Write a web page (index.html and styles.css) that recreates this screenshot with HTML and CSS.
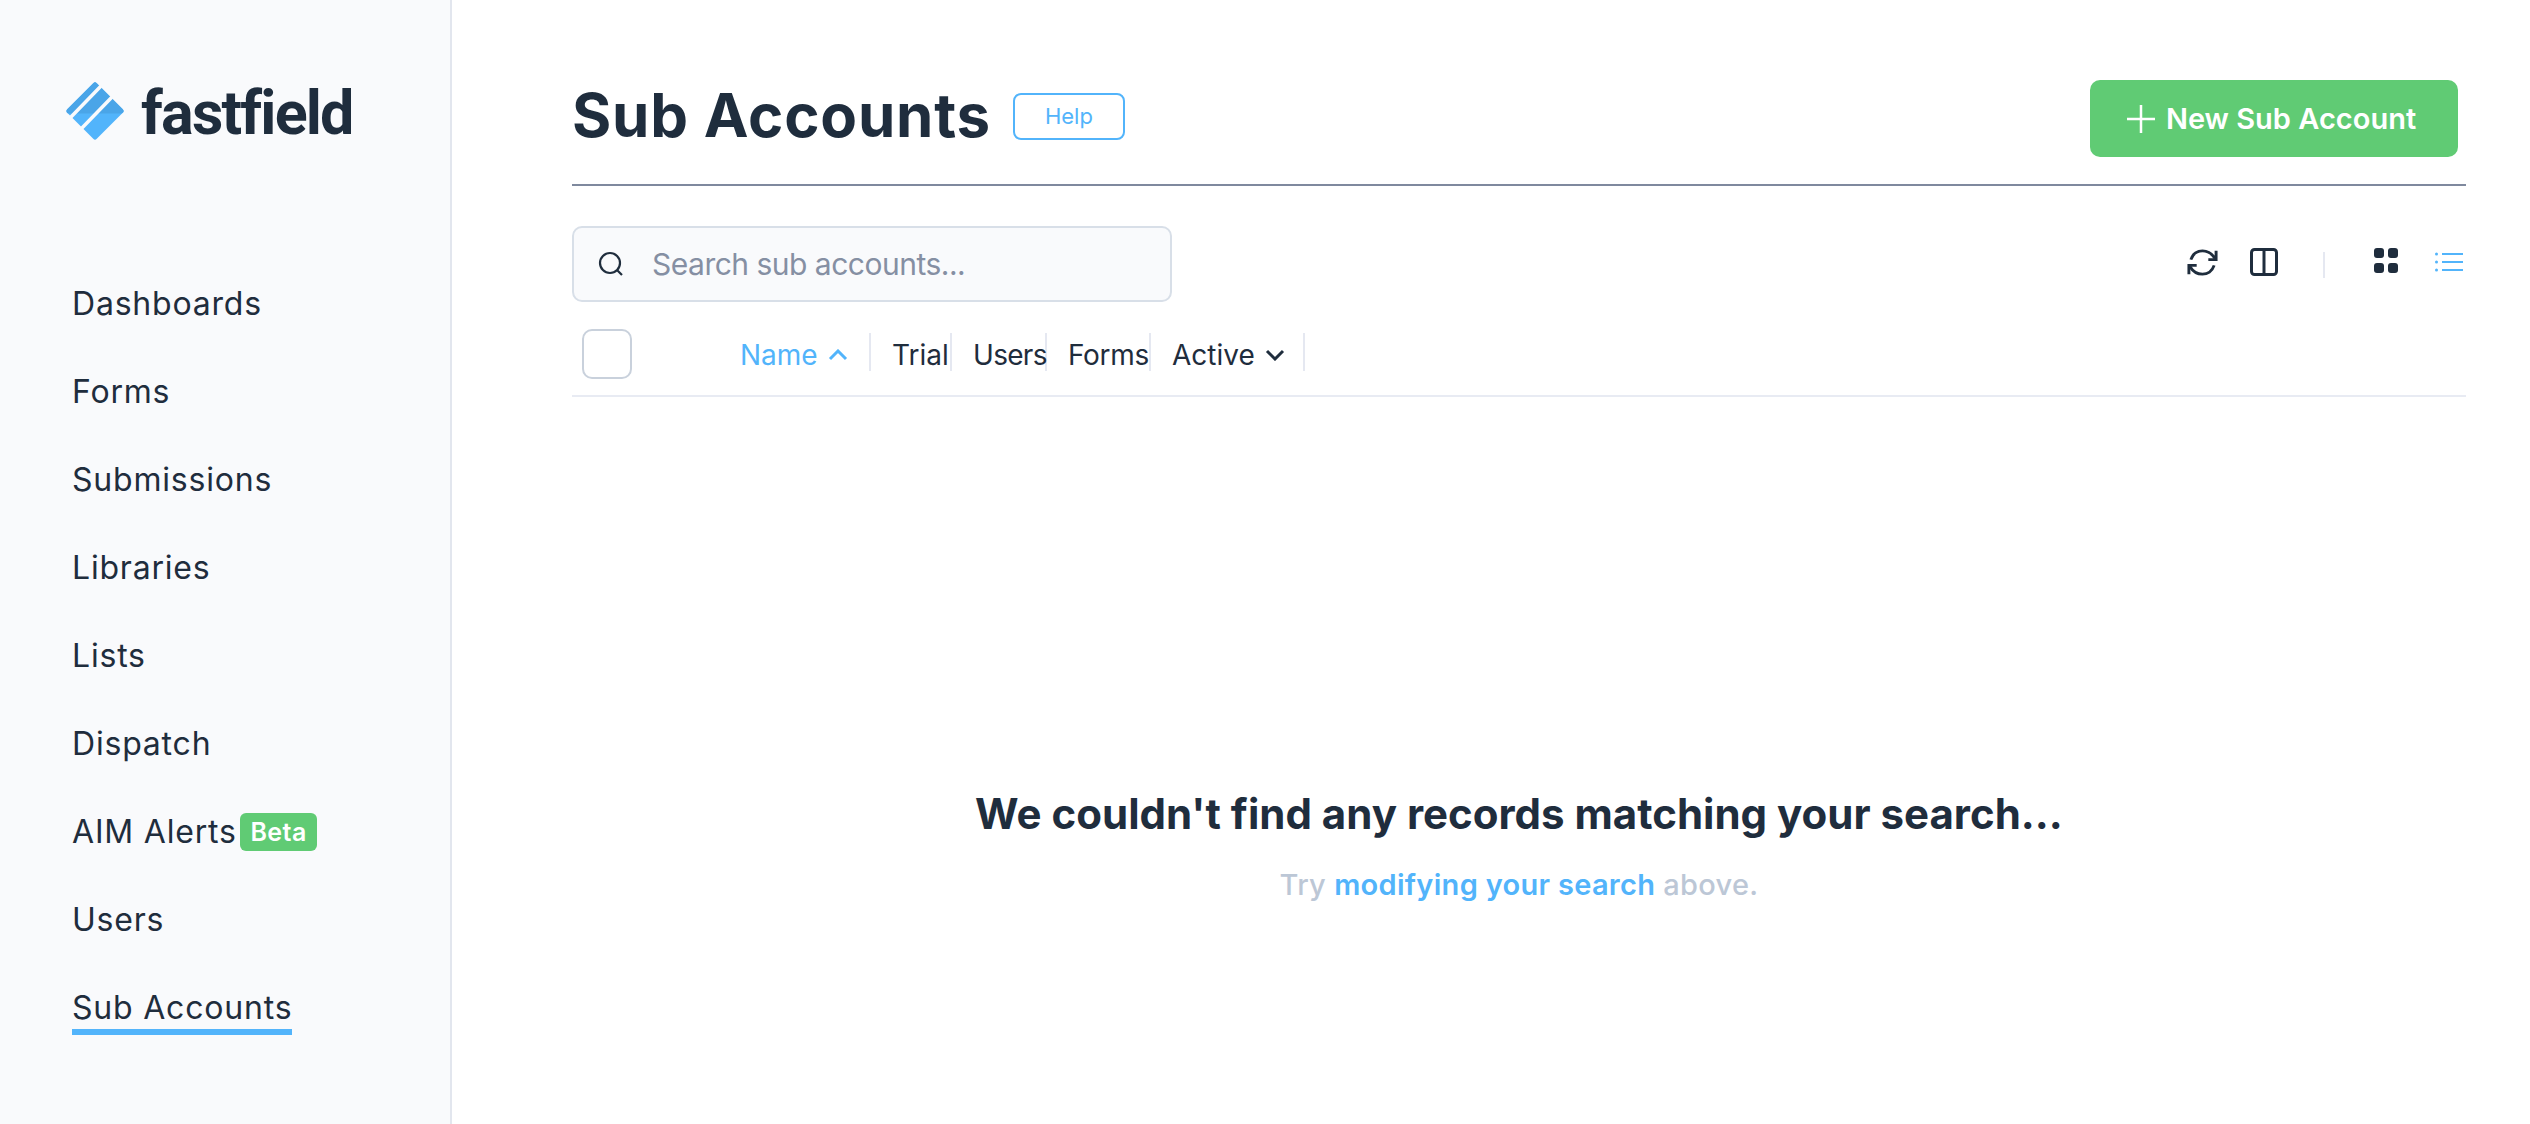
FILE: index.html
```html
<!DOCTYPE html>
<html lang="en">
<head>
  <meta charset="UTF-8">
  <title>Sub Accounts</title>
  <link rel="stylesheet" href="styles.css">
</head>
<body>

<div class="sidebar">
  <div class="logo">
    <svg class="logo-mark" width="58" height="58" viewBox="0 0 58 58">
      <path d="M29 3 L55 29 L29 55 L3 29 Z" fill="#52b4fb" stroke="#52b4fb" stroke-width="5" stroke-linejoin="round"/>
      <path d="M29 3 L55 29 H3 Z" fill="#4aa5e8" stroke="#4aa5e8" stroke-width="5" stroke-linejoin="round"/>
      <path d="M4 36 L36 3 M15 47 L47 14" stroke="#f9fafc" stroke-width="3.5"/>
    </svg>
    <span class="logo-text">fastfield</span>
  </div>
  <nav class="nav">
    <a href="#">Dashboards</a>
    <a href="#">Forms</a>
    <a href="#">Submissions</a>
    <a href="#">Libraries</a>
    <a href="#">Lists</a>
    <a href="#">Dispatch</a>
    <a href="#">AIM Alerts <span class="beta">Beta</span></a>
    <a href="#">Users</a>
    <a href="#" class="active">Sub Accounts</a>
  </nav>
</div>

<div class="main">
  <div class="page-header">
    <h1>Sub Accounts</h1>
    <button class="help-btn">Help</button>
    <button class="new-btn">
      <svg width="30" height="30" viewBox="0 0 30 30"><path d="M15 1 V29 M1 15 H29" stroke="#fff" stroke-width="2.5"/></svg>
      New Sub Account
    </button>
  </div>

  <div class="toolbar">
    <div class="search">
      <svg width="26" height="26" viewBox="0 0 26 26" fill="none" stroke="#1f2d3d" stroke-width="2.2"><circle cx="12" cy="12" r="10"/><path d="M19 19 L24 24"/></svg>
      <span>Search sub accounts...</span>
    </div>
    <div class="tools">
      <svg class="tool-refresh" width="33" height="29" viewBox="0 0 34 28" fill="none" stroke="#1f2d3d" stroke-width="3"><path d="M5 11 C7 5 12 2 17 2 C23 2 27 5 30 10"/><path d="M31 2 V11 H23"/><path d="M29 17 C27 23 22 26 17 26 C11 26 7 23 4 18"/><path d="M3 26 V17 H11"/></svg>
      <svg class="tool-cols" width="28" height="28" viewBox="0 0 28 28" fill="none" stroke="#1f2d3d" stroke-width="3"><rect x="1.5" y="1.5" width="25" height="25" rx="3"/><path d="M14 1.5 V26.5"/></svg>
      <span class="tool-sep"></span>
      <svg class="tool-grid" width="24" height="25" viewBox="0 0 24 25" fill="#1f2d3d"><rect width="10" height="10" rx="3"/><rect x="14" width="10" height="10" rx="3"/><rect y="15" width="10" height="10" rx="3"/><rect x="14" y="15" width="10" height="10" rx="3"/></svg>
      <svg class="tool-list" width="28" height="20" viewBox="0 0 28 20" fill="#52b4fb"><circle cx="1.5" cy="2" r="1.5"/><circle cx="1.5" cy="10" r="1.5"/><circle cx="1.5" cy="18" r="1.5"/><rect x="7" y="1" width="21" height="2"/><rect x="7" y="9" width="21" height="2"/><rect x="7" y="17" width="21" height="2"/></svg>
    </div>
  </div>

  <div class="table-head">
    <div class="check-cell"><span class="check"></span></div>
    <div class="col col-name">Name <svg width="20" height="12" viewBox="0 0 20 12" fill="none" stroke="#52b4fb" stroke-width="3"><path d="M2 10 L10 2 L18 10"/></svg></div>
    <div class="col col-trial">Trial</div>
    <div class="col col-users">Users</div>
    <div class="col col-forms">Forms</div>
    <div class="col col-active">Active <svg width="20" height="12" viewBox="0 0 20 12" fill="none" stroke="#1f2d3d" stroke-width="3"><path d="M2 2 L10 10 L18 2"/></svg></div>
  </div>

  <div class="empty">
    <h2>We couldn't find any records matching your search...</h2>
    <p>Try <a href="#">modifying your search</a> above.</p>
  </div>
</div>

</body>
</html>
```

FILE: styles.css
```css
body {
  font-family: Inter, "Noto Sans", sans-serif;
  margin: 0;
  padding: 0;
  display: flex;
  height: 100vh;
  overflow: hidden;
  background-color: #fff;
  color: #1f2d3d;
}

/* Sidebar */
.sidebar {
  width: 450px;
  flex-shrink: 0;
  background-color: #f9fafc;
  border-right: 2px solid #e2e6ee;
}

.logo {
  display: flex;
  align-items: center;
  padding: 82px 0 0 66px;
  height: 58px;
}

.logo-text {
  font-family: Roboto, sans-serif;
  font-weight: 700;
  font-size: 61px;
  letter-spacing: -1.8px;
  margin-left: 17px;
  line-height: 58px;
  position: relative;
  top: 2px;
}

.nav {
  display: flex;
  flex-direction: column;
  padding: 119px 0 0 72px;
  align-items: flex-start;
}

.nav a {
  display: flex;
  align-items: center;
  height: 88px;
  color: #1f2d3d;
  text-decoration: none;
  font-size: 32px;
  letter-spacing: 0.8px;
  white-space: pre;
  position: relative;
}

.nav a.active::after {
  content: "";
  position: absolute;
  left: 0;
  right: 0;
  bottom: 16px;
  height: 6px;
  background-color: #52b4fb;
}

.beta {
  background-color: #60cb74;
  color: #fff;
  font-size: 25px;
  font-weight: 600;
  letter-spacing: 0.4px;
  border-radius: 6px;
  padding: 4px 10px;
  margin-left: -6px;
  margin-top: 2px;
}

/* Main area */
.main {
  flex: 1;
  padding: 0 64px 0 120px;
  min-width: 0;
}

.page-header {
  display: flex;
  align-items: center;
  height: 184px;
  border-bottom: 2px solid #7f899e;
}

/* page-header children sit below the middle of the band */
.page-header > * {
  position: relative;
  top: 24px;
}

h1 {
  font-size: 60px;
  font-weight: 700;
  letter-spacing: 0.8px;
  margin: -2px 22px 0 0;
}

.help-btn {
  width: 112px;
  height: 47px;
  background: #fff;
  border: 2px solid #52b4fb;
  border-radius: 8px;
  color: #52b4fb;
  font-family: inherit;
  font-size: 22px;
}

.new-btn {
  margin-left: auto;
  margin-right: 8px;
  margin-top: 5px;
  display: flex;
  align-items: center;
  justify-content: center;
  gap: 10px;
  width: 368px;
  height: 77px;
  padding: 0 6px 0 0;
  background-color: #60cb74;
  border: none;
  border-radius: 10px;
  color: #fff;
  font-family: inherit;
  font-size: 29px;
  font-weight: 600;
}

.toolbar {
  display: flex;
  justify-content: space-between;
  margin-top: 40px;
  height: 76px;
}

.search {
  width: 600px;
  box-sizing: border-box;
  display: flex;
  align-items: center;
  gap: 28px;
  padding-left: 24px;
  background-color: #f9fafc;
  border: 2px solid #d8dfe8;
  border-radius: 10px;
  font-size: 30px;
  letter-spacing: -0.5px;
  color: #858fa3;
}

.tools {
  display: flex;
  align-items: flex-start;
  padding-top: 22px;
  padding-right: 3px;
}

.tool-cols { margin-left: 31px; }
.tool-grid { margin-left: 49px; }
.tool-list { margin-left: 37px; margin-top: 4px; }

.tool-sep {
  width: 2px;
  height: 26px;
  margin: 4px 0 0 45px;
  background-color: #e5e8f1;
}

/* Table header */
.table-head {
  display: flex;
  margin-top: 27px;
  height: 66px;
  border-bottom: 2px solid #e8ebf3;
  font-size: 28px;
}

.check-cell {
  width: 168px;
  padding-left: 10px;
  box-sizing: border-box;
}

.check {
  display: block;
  width: 50px;
  height: 50px;
  box-sizing: border-box;
  border: 2px solid #c9d1dc;
  border-radius: 10px;
}

.col {
  height: 32px;
  margin-top: 4px;
  display: flex;
  align-items: center;
  gap: 10px;
  padding-top: 6px;
  border-right: 2px solid #e5e8f1;
  white-space: nowrap;
  line-height: 30px;
}

.col-name { width: 129px; color: #52b4fb; }
.col-trial { width: 58px; padding-left: 21px; }
.col-users { width: 72px; padding-left: 21px; letter-spacing: -0.7px; }
.col-forms { width: 81px; padding-left: 21px; letter-spacing: -0.3px; }
.col-active { width: 131px; padding-left: 21px; }

/* Empty state */
.empty {
  text-align: center;
  padding-top: 387px;
}

h2 {
  font-size: 42px;
  font-weight: 700;
  margin: 0;
  line-height: 60px;
}

.empty p {
  margin: 23px 0 0;
  font-size: 29px;
  font-weight: 500;
  letter-spacing: 0.3px;
  color: #bcc7d6;
}

.empty a {
  color: #52b4fb;
  font-weight: 600;
  text-decoration: none;
}
```
